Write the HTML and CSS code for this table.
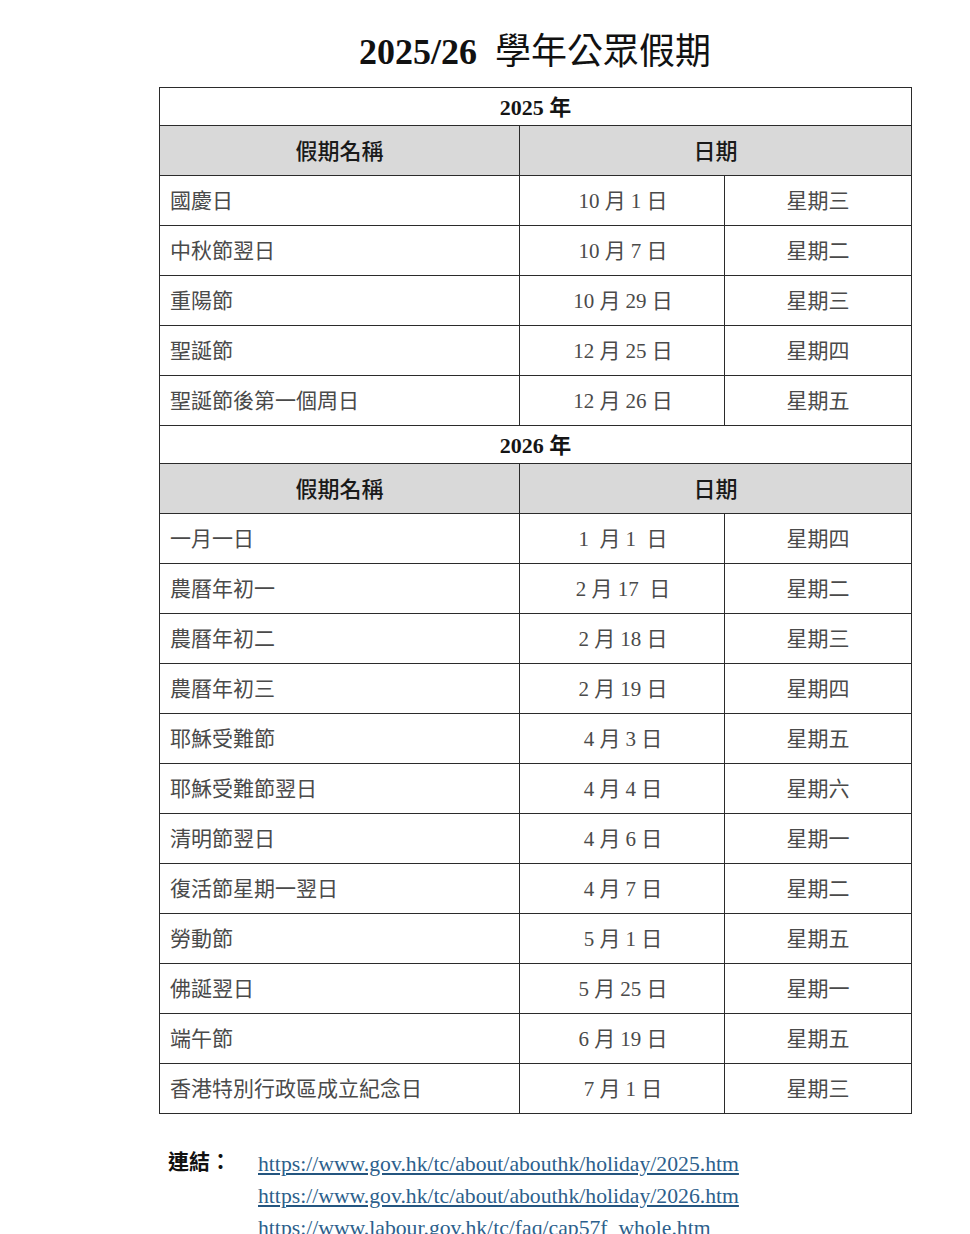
FILE: index.html
```html
<!DOCTYPE html>
<html lang="zh-Hant">
<head>
<meta charset="utf-8">
<title>2025/26 學年公眾假期</title>
<link rel="stylesheet" href="styles.css">
</head>
<body>
<div class="page">
  <h1 class="title"><span class="title-num">2025/26</span>&nbsp; <span class="title-cjk">學年公眾假期</span></h1>
  <table class="holidays">
    <colgroup>
      <col class="c-name">
      <col class="c-date">
      <col class="c-day">
    </colgroup>
    <tbody>
      <tr class="year"><td colspan="3">2025 年</td></tr>
      <tr class="head"><td>假期名稱</td><td colspan="2">日期</td></tr>
      <tr><td class="name">國慶日</td><td class="date">10 月 1 日</td><td class="day">星期三</td></tr>
      <tr><td class="name">中秋節翌日</td><td class="date">10 月 7 日</td><td class="day">星期二</td></tr>
      <tr><td class="name">重陽節</td><td class="date">10 月 29 日</td><td class="day">星期三</td></tr>
      <tr><td class="name">聖誕節</td><td class="date">12 月 25 日</td><td class="day">星期四</td></tr>
      <tr><td class="name">聖誕節後第一個周日</td><td class="date">12 月 26 日</td><td class="day">星期五</td></tr>
      <tr class="year"><td colspan="3">2026 年</td></tr>
      <tr class="head"><td>假期名稱</td><td colspan="2">日期</td></tr>
      <tr><td class="name">一月一日</td><td class="date">1&nbsp; 月 1&nbsp; 日</td><td class="day">星期四</td></tr>
      <tr><td class="name">農曆年初一</td><td class="date">2 月 17&nbsp; 日</td><td class="day">星期二</td></tr>
      <tr><td class="name">農曆年初二</td><td class="date">2 月 18 日</td><td class="day">星期三</td></tr>
      <tr><td class="name">農曆年初三</td><td class="date">2 月 19 日</td><td class="day">星期四</td></tr>
      <tr><td class="name">耶穌受難節</td><td class="date">4 月 3 日</td><td class="day">星期五</td></tr>
      <tr><td class="name">耶穌受難節翌日</td><td class="date">4 月 4 日</td><td class="day">星期六</td></tr>
      <tr><td class="name">清明節翌日</td><td class="date">4 月 6 日</td><td class="day">星期一</td></tr>
      <tr><td class="name">復活節星期一翌日</td><td class="date">4 月 7 日</td><td class="day">星期二</td></tr>
      <tr><td class="name">勞動節</td><td class="date">5 月 1 日</td><td class="day">星期五</td></tr>
      <tr><td class="name">佛誕翌日</td><td class="date">5 月 25 日</td><td class="day">星期一</td></tr>
      <tr><td class="name">端午節</td><td class="date">6 月 19 日</td><td class="day">星期五</td></tr>
      <tr><td class="name">香港特別行政區成立紀念日</td><td class="date">7 月 1 日</td><td class="day">星期三</td></tr>
    </tbody>
  </table>
  <div class="links">
    <div class="links-label">連結：</div>
    <div class="links-list">
      <a href="#">https://www.gov.hk/tc/about/abouthk/holiday/2025.htm</a>
      <a href="#">https://www.gov.hk/tc/about/abouthk/holiday/2026.htm</a>
      <a href="#">https://www.labour.gov.hk/tc/faq/cap57f_whole.htm</a>
    </div>
  </div>
</div>
</body>
</html>
```

FILE: styles.css
```css
html, body {
  margin: 0;
  padding: 0;
  background: #ffffff;
}

body {
  font-family: "Liberation Serif", "Noto Sans CJK TC", serif;
  color: #111;
  overflow: hidden;
}

.page {
  width: 970px;
  height: 1234px;
  overflow: hidden;
}

.title {
  margin: 0;
  padding-top: 30px;
  height: 87px;
  box-sizing: border-box;
  width: 1070px;
  text-align: center;
  font-size: 36px;
  line-height: 44px;
  font-weight: normal;
  color: #111;
  white-space: nowrap;
}

.title-num {
  font-weight: 700;
}

.title-cjk {
  font-weight: 400;
}

.holidays {
  margin-left: 159px;
  width: 752px;
  border-collapse: collapse;
  table-layout: fixed;
}

.c-name { width: 360px; }
.c-date { width: 205px; }
.c-day { width: 187px; }

.holidays td {
  border: 1px solid #2b2b2b;
  padding: 0 0 3px 0;
  height: 46px;
  vertical-align: middle;
  font-size: 21px;
  color: #4a4a4a;
  white-space: nowrap;
}

.holidays .year td {
  height: 33px;
  padding-bottom: 4px;
  text-align: center;
  font-weight: 700;
  font-size: 22px;
  color: #151515;
}

.holidays .head td {
  background: #d9d9d9;
  text-align: center;
  font-size: 22px;
  color: #1a1a1a;
  font-weight: 500;
}

.holidays td.name {
  padding-left: 10px;
}

.holidays td.date {
  text-align: center;
  padding-left: 2px;
}

.holidays td.day {
  text-align: center;
}

.links {
  display: flex;
  margin-top: 34px;
  margin-left: 168px;
}

.links-label {
  width: 90px;
  font-size: 21px;
  font-weight: 700;
  color: #111;
  line-height: 32px;
  margin-top: -2px;
}

.links-list {
  display: flex;
  flex-direction: column;
}

.links-list a {
  font-size: 21.7px;
  line-height: 32px;
  color: #2d5f8c;
  text-decoration: underline;
  text-decoration-color: #24557f;
  white-space: nowrap;
}
```
